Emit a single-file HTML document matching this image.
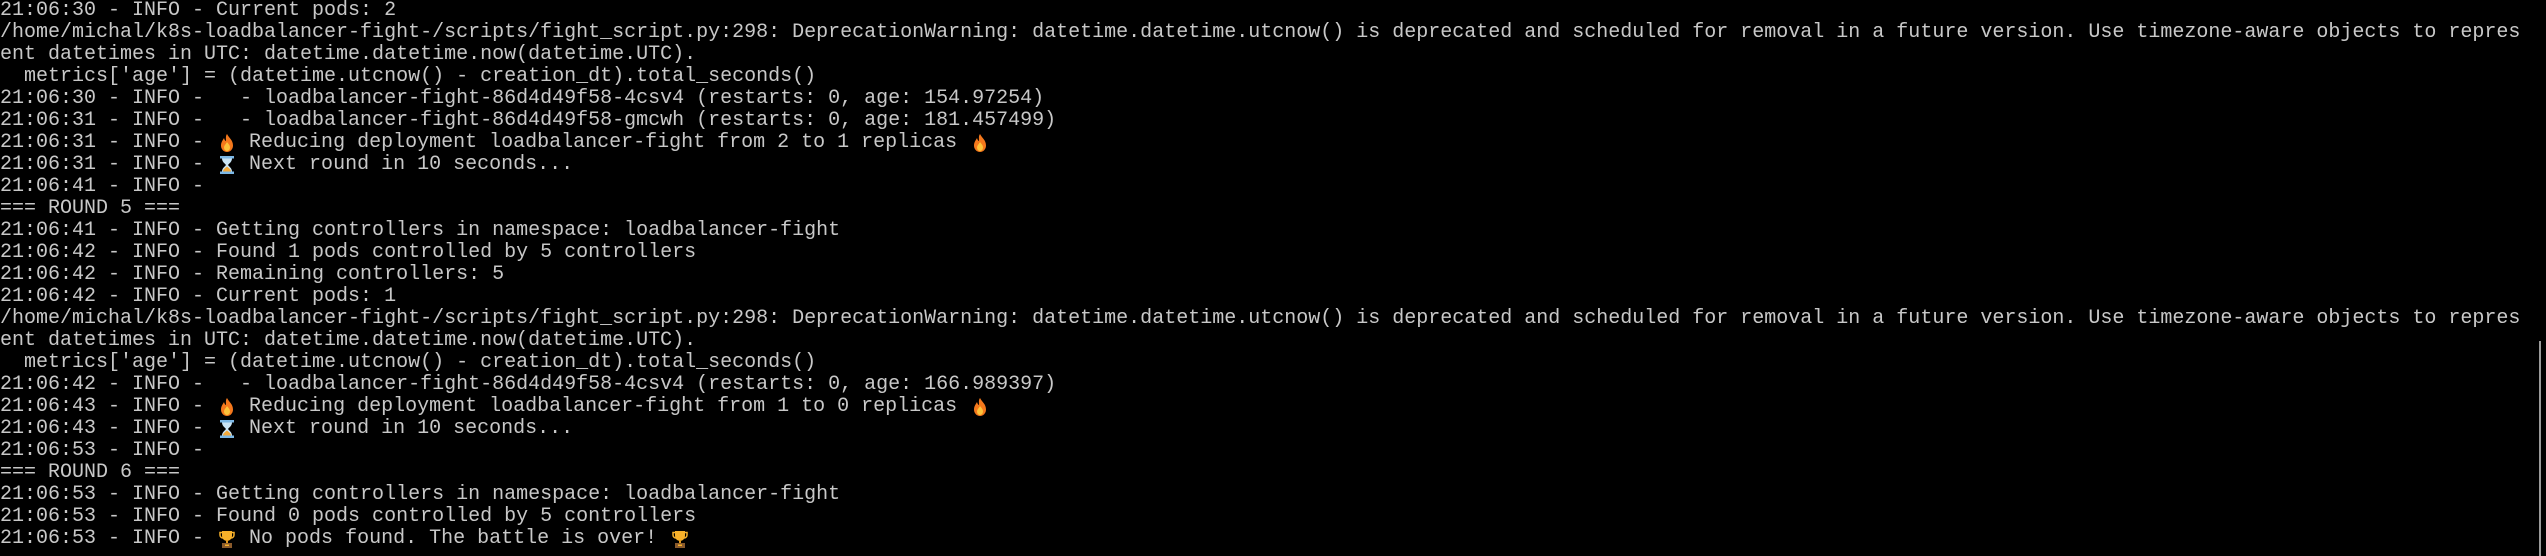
<!DOCTYPE html>
<html><head><meta charset="utf-8"><style>
html,body{margin:0;padding:0;background:#000;width:2546px;height:556px;overflow:hidden}
pre{margin:0;padding:0;font-family:"Liberation Mono","DejaVu Sans Mono",monospace;font-size:20px;line-height:22px;color:#c8c8c8;white-space:pre}
.e{display:inline-block;width:21px;height:22px;vertical-align:top;position:relative}
.e svg{position:absolute;left:3px;top:1px}
.sb{position:absolute;left:2539px;top:341px;width:2px;height:215px;background:#9a9a9a}
</style></head><body>
<pre>21:06:30 - INFO - Current pods: 2
/home/michal/k8s-loadbalancer-fight-/scripts/fight_script.py:298: DeprecationWarning: datetime.datetime.utcnow() is deprecated and scheduled for removal in a future version. Use timezone-aware objects to repres
ent datetimes in UTC: datetime.datetime.now(datetime.UTC).
  metrics['age'] = (datetime.utcnow() - creation_dt).total_seconds()
21:06:30 - INFO -   - loadbalancer-fight-86d4d49f58-4csv4 (restarts: 0, age: 154.97254)
21:06:31 - INFO -   - loadbalancer-fight-86d4d49f58-gmcwh (restarts: 0, age: 181.457499)
21:06:31 - INFO - <span class="e"><svg width="16" height="20" viewBox="0 0 16 20"><path d="M8 1C10 5 14 7 14 12.5A6 6.5 0 0 1 2 12.5C2 9 4 7 5 5C5.5 7 6.5 8 7 8C7 5 6.5 3 8 1Z" fill="#f4781c"/><path d="M8 9C9.5 11 11 12 11 14.5A3 3.5 0 0 1 5 14.5C5 12.5 7 11 8 9Z" fill="#fcc33a"/></svg></span> Reducing deployment loadbalancer-fight from 2 to 1 replicas <span class="e"><svg width="16" height="20" viewBox="0 0 16 20"><path d="M8 1C10 5 14 7 14 12.5A6 6.5 0 0 1 2 12.5C2 9 4 7 5 5C5.5 7 6.5 8 7 8C7 5 6.5 3 8 1Z" fill="#f4781c"/><path d="M8 9C9.5 11 11 12 11 14.5A3 3.5 0 0 1 5 14.5C5 12.5 7 11 8 9Z" fill="#fcc33a"/></svg></span>
21:06:31 - INFO - <span class="e"><svg width="16" height="20" viewBox="0 0 16 20"><rect x="1" y="1" width="14" height="2.5" fill="#7cb8e6"/><rect x="1" y="16.5" width="14" height="2.5" fill="#7cb8e6"/><path d="M3 3.5H13C13 7 9.5 9 9 10C9.5 11 13 13 13 16.5H3C3 13 6.5 11 7 10C6.5 9 3 7 3 3.5Z" fill="#c9e4f5"/><path d="M4 16.5C4 14 7 12.5 8 11.5C9 12.5 12 14 12 16.5Z" fill="#f3a93a"/></svg></span> Next round in 10 seconds...
21:06:41 - INFO - 
=== ROUND 5 ===
21:06:41 - INFO - Getting controllers in namespace: loadbalancer-fight
21:06:42 - INFO - Found 1 pods controlled by 5 controllers
21:06:42 - INFO - Remaining controllers: 5
21:06:42 - INFO - Current pods: 1
/home/michal/k8s-loadbalancer-fight-/scripts/fight_script.py:298: DeprecationWarning: datetime.datetime.utcnow() is deprecated and scheduled for removal in a future version. Use timezone-aware objects to repres
ent datetimes in UTC: datetime.datetime.now(datetime.UTC).
  metrics['age'] = (datetime.utcnow() - creation_dt).total_seconds()
21:06:42 - INFO -   - loadbalancer-fight-86d4d49f58-4csv4 (restarts: 0, age: 166.989397)
21:06:43 - INFO - <span class="e"><svg width="16" height="20" viewBox="0 0 16 20"><path d="M8 1C10 5 14 7 14 12.5A6 6.5 0 0 1 2 12.5C2 9 4 7 5 5C5.5 7 6.5 8 7 8C7 5 6.5 3 8 1Z" fill="#f4781c"/><path d="M8 9C9.5 11 11 12 11 14.5A3 3.5 0 0 1 5 14.5C5 12.5 7 11 8 9Z" fill="#fcc33a"/></svg></span> Reducing deployment loadbalancer-fight from 1 to 0 replicas <span class="e"><svg width="16" height="20" viewBox="0 0 16 20"><path d="M8 1C10 5 14 7 14 12.5A6 6.5 0 0 1 2 12.5C2 9 4 7 5 5C5.5 7 6.5 8 7 8C7 5 6.5 3 8 1Z" fill="#f4781c"/><path d="M8 9C9.5 11 11 12 11 14.5A3 3.5 0 0 1 5 14.5C5 12.5 7 11 8 9Z" fill="#fcc33a"/></svg></span>
21:06:43 - INFO - <span class="e"><svg width="16" height="20" viewBox="0 0 16 20"><rect x="1" y="1" width="14" height="2.5" fill="#7cb8e6"/><rect x="1" y="16.5" width="14" height="2.5" fill="#7cb8e6"/><path d="M3 3.5H13C13 7 9.5 9 9 10C9.5 11 13 13 13 16.5H3C3 13 6.5 11 7 10C6.5 9 3 7 3 3.5Z" fill="#c9e4f5"/><path d="M4 16.5C4 14 7 12.5 8 11.5C9 12.5 12 14 12 16.5Z" fill="#f3a93a"/></svg></span> Next round in 10 seconds...
21:06:53 - INFO - 
=== ROUND 6 ===
21:06:53 - INFO - Getting controllers in namespace: loadbalancer-fight
21:06:53 - INFO - Found 0 pods controlled by 5 controllers
21:06:53 - INFO - <span class="e"><svg width="16" height="20" viewBox="0 0 16 20"><path d="M3 2H13V7A5 5 0 0 1 3 7Z" fill="#f7b12a"/><path d="M3 3.5H1V6A3 3 0 0 0 4 9M13 3.5H15V6A3 3 0 0 1 12 9" stroke="#f7b12a" stroke-width="1.5" fill="none"/><rect x="7" y="11" width="2" height="3" fill="#e39a20"/><rect x="3" y="14" width="10" height="5" fill="#8a5a2b"/><rect x="6" y="15.5" width="4" height="1.5" fill="#f7b12a"/></svg></span> No pods found. The battle is over! <span class="e"><svg width="16" height="20" viewBox="0 0 16 20"><path d="M3 2H13V7A5 5 0 0 1 3 7Z" fill="#f7b12a"/><path d="M3 3.5H1V6A3 3 0 0 0 4 9M13 3.5H15V6A3 3 0 0 1 12 9" stroke="#f7b12a" stroke-width="1.5" fill="none"/><rect x="7" y="11" width="2" height="3" fill="#e39a20"/><rect x="3" y="14" width="10" height="5" fill="#8a5a2b"/><rect x="6" y="15.5" width="4" height="1.5" fill="#f7b12a"/></svg></span></pre>
<div class="sb"></div>
</body></html>
